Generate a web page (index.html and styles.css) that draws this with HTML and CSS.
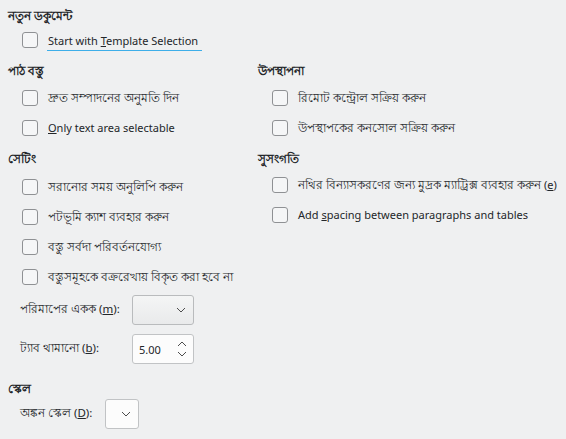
FILE: index.html
```html
<!DOCTYPE html>
<html>
<head>
    <meta charset="UTF-8">
    <title>Impress Options</title>
    <link rel="stylesheet" href="styles.css">
</head>
<body>
    <!-- New document -->
    <div class="section">
        <h3>নতুন ডকুমেন্ট</h3>
        <label class="check"><span class="box"></span><span class="focus en">Start with <u>T</u>emplate Selection</span></label>
    </div>

    <div class="columns">
        <div class="col left">
            <div class="section">
                <h3>পাঠ বস্তু</h3>
                <label class="check"><span class="box"></span>দ্রুত সম্পাদনের অনুমতি দিন</label>
                <label class="check"><span class="box"></span><span class="en"><u>O</u>nly text area selectable</span></label>
            </div>
            <div class="section">
                <h3>সেটিং</h3>
                <div class="rows">
                    <label class="check"><span class="box"></span>সরানোর সময় অনুলিপি করুন</label>
                    <label class="check"><span class="box"></span>পটভূমি ক্যাশ ব্যবহার করুন</label>
                    <label class="check"><span class="box"></span>বস্তু সর্বদা পরিবর্তনযোগ্য</label>
                    <label class="check"><span class="box"></span>বস্তুসমূহকে বক্ররেখায় বিকৃত করা হবে না</label>
                </div>
                <div class="fields">
                    <span class="label">পরিমাপের একক (<u>m</u>):</span>
                    <div class="combo grey">
                        <svg width="10" height="6" viewBox="0 0 10 6"><polyline points="1,1 5,5 9,1" fill="none" stroke="#4d4d4d" stroke-width="1"/></svg>
                    </div>
                    <span class="label">ট্যাব থামানো (<u>b</u>):</span>
                    <div class="spin">
                        <span class="en">5.00</span>
                        <svg width="10" height="18" viewBox="0 0 10 18"><polyline points="1,6 5,2 9,6" fill="none" stroke="#4d4d4d" stroke-width="1"/><polyline points="1,12 5,16 9,12" fill="none" stroke="#4d4d4d" stroke-width="1"/></svg>
                    </div>
                </div>
            </div>
        </div>
        <div class="col right">
            <div class="section">
                <h3>উপস্থাপনা</h3>
                <label class="check"><span class="box"></span>রিমোট কন্ট্রোল সক্রিয় করুন</label>
                <label class="check"><span class="box"></span>উপস্থাপকের কনসোল সক্রিয় করুন</label>
            </div>
            <div class="section">
                <h3>সুসংগতি</h3>
                <label class="check"><span class="box"></span><span>নথির বিন্যাসকরণের জন্য মুদ্রক ম্যাট্রিক্স ব্যবহার করুন <span class="en">(<u>e</u>)</span></span></label>
                <label class="check"><span class="box"></span><span class="en">Add <u>s</u>pacing between paragraphs and tables</span></label>
            </div>
        </div>
    </div>

    <div class="section scale">
        <h3>স্কেল</h3>
        <div class="scale-row">
            <span class="label">অঙ্কন স্কেল (<u>D</u>):</span>
            <div class="combo white small">
                <svg width="10" height="6" viewBox="0 0 10 6"><polyline points="1,1 5,5 9,1" fill="none" stroke="#4d4d4d" stroke-width="1"/></svg>
            </div>
        </div>
    </div>
</body>
</html>
```
FILE: styles.css
```css
html, body {
    margin: 0;
    background: #eff0f1;
}
body {
    padding: 0 8px;
    font-family: "Noto Sans", sans-serif;
    font-size: 11.5px;
    color: #232629;
    width: 566px;
    height: 439px;
    box-sizing: border-box;
    overflow: hidden;
}
.en {
    font-size: 11px;
}
h3 {
    margin: 0;
    font-size: 12px;
    font-weight: bold;
    line-height: 18px;
}
.section {
    padding-top: 7px;
}
.columns {
    display: grid;
    grid-template-columns: 250px 1fr;
}
.columns .section:first-child h3 {
    margin-bottom: 3px;
}
.check {
    display: flex;
    align-items: center;
    height: 30px;
    line-height: 16px;
    margin-left: 14px;
    white-space: nowrap;
}
.box {
    width: 14px;
    height: 14px;
    border: 1px solid #8f9194;
    border-radius: 3px;
    background: #f5f6f7;
    margin-right: 10px;
    flex: none;
}
.focus {
    align-self: flex-start;
    border-bottom: 1px solid #3daee9;
    padding: 0 4px 1px 1px;
    margin: 8px 0 0 -1px;
}
.left .rows {
    margin-top: 4px;
}
.right .section:last-child h3 {
    margin-bottom: 2px;
}
.fields {
    display: grid;
    grid-template-columns: 112px 62px;
    row-gap: 9px;
    align-items: center;
    margin-top: 3px;
    margin-left: 12px;
}
.combo, .spin {
    height: 30px;
    box-sizing: border-box;
    border: 1px solid #c1c3c5;
    border-radius: 3px;
    display: flex;
    align-items: center;
}
.combo {
    justify-content: flex-end;
    padding-right: 7px;
}
.combo.grey {
    background: linear-gradient(#f4f5f5, #e9eaeb);
    border-color: #b9bbbd;
}
.combo.white, .spin {
    background: #fcfcfc;
}
.spin {
    justify-content: space-between;
    padding: 0 6px 0 6px;
}
.scale {
    padding-top: 16px;
}
.scale-row {
    display: flex;
    align-items: center;
    margin: 1px 0 0 12px;
}
.scale-row .label {
    width: 85px;
}
.combo.small {
    width: 34px;
    padding-right: 7px;
}
```
